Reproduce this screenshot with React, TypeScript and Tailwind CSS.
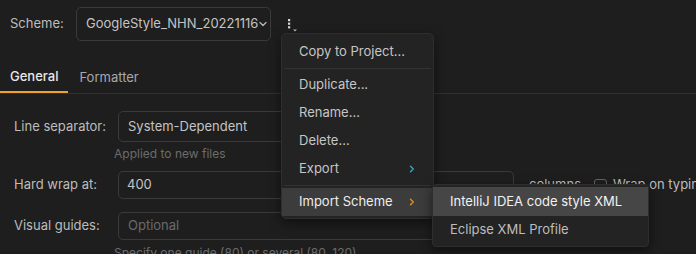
function Chevron({ color }: { color: string }) {
  return (
    <svg width="6" height="8" viewBox="0 0 6 8" fill="none">
      <path d="M1.5 1.2L4.3 4L1.5 6.8" stroke={color} strokeWidth="1.4" strokeLinecap="round" strokeLinejoin="round" />
    </svg>
  );
}

function Kebab() {
  return (
    <svg width="14" height="16" viewBox="0 0 14 16" fill="none">
      <rect x="2" y="1" width="2.2" height="2.2" fill="#d8d8d8" />
      <rect x="2" y="4.6" width="2.2" height="2.2" fill="#d8d8d8" />
      <rect x="2" y="8.2" width="2.2" height="2.2" fill="#d8d8d8" />
      <path d="M7 11.6h4l-2 2z" fill="#bdbdbd" />
    </svg>
  );
}

function MenuItem({ label, active, chevron }: { label: string; active?: boolean; chevron?: string }) {
  return (
    <div
      className={
        active
          ? "flex h-[28px] items-center bg-[#3c3c3c] pl-[17px] pr-[18px] text-[#ededed]"
          : "flex h-[28px] items-center pl-[17px] pr-[18px] text-[#c6c6c6]"
      }
    >
      <span className="whitespace-nowrap">{label}</span>
      {chevron && (
        <span className="ml-auto flex">
          <Chevron color={chevron} />
        </span>
      )}
    </div>
  );
}

function Sep() {
  return (
    <div className="flex h-[5px] items-center px-[2px]">
      <div className="h-px w-full bg-[#333333]" />
    </div>
  );
}

export default function App() {
  return (
    <div className="relative h-[254px] w-[696px] overflow-hidden bg-[#1e1e1e] font-[Inter,sans-serif] text-[13px] text-[#bdbdbd]">
      {/* Scheme row */}
      <div className="flex h-[48px] items-center pl-[10px]">
        <span className="w-[66px]">Scheme:</span>
        <div className="flex h-[34px] w-[195px] items-center rounded-[5px] border border-[#3a3a3a] pl-[9px] pr-[3px]">
          <span className="flex-1 overflow-hidden whitespace-nowrap text-[#c4c4c4]">GoogleStyle_NHN_20221116</span>
          <svg width="8" height="6" viewBox="0 0 8 6" fill="none" className="-ml-[2px]">
            <path d="M1 1.5L4 4.5L7 1.5" stroke="#bdbdbd" strokeWidth="1.2" strokeLinecap="round" strokeLinejoin="round" />
          </svg>
        </div>
        <div className="ml-[15px] mt-[3px] flex">
          <Kebab />
        </div>
      </div>

      {/* Tabs */}
      <div className="mt-[14px] flex h-[32px] border-b border-[#313131]">
        <div className="flex items-center border-b-2 border-[#f0a02c] px-[10px] font-medium text-[#e8e8e8]">General</div>
        <div className="flex items-center px-[11px] text-[#a9a9a9]">Formatter</div>
      </div>

      {/* Form */}
      <div className="pl-[14px]">
        <div className="mt-[17px] flex items-center">
          <span className="w-[104px] shrink-0">Line separator:</span>
          <div className="flex h-[31px] w-[200px] shrink-0 items-center rounded-[5px] border border-[#3a3a3a] pl-[9px] text-[#c4c4c4]">
            System-Dependent
          </div>
        </div>
        <div className="ml-[100px] mt-[4px] h-[16px] text-[12px] leading-[16px] text-[#6c6c6c]">Applied to new files</div>

        <div className="mt-[9px] flex items-center">
          <span className="w-[104px] shrink-0">Hard wrap at:</span>
          <div className="flex h-[28px] w-[396px] shrink-0 items-center rounded-[5px] border border-[#3a3a3a] pl-[8px] text-[#c4c4c4]">
            400
          </div>
          <span className="ml-[15px] shrink-0">columns</span>
          <div className="ml-[13px] h-[13px] w-[13px] shrink-0 rounded-[3px] border border-[#666666]" />
          <span className="ml-[6px] shrink-0 whitespace-nowrap">Wrap on typing</span>
        </div>

        <div className="mt-[13px] flex items-center">
          <span className="w-[104px] shrink-0">Visual guides:</span>
          <div className="flex h-[28px] w-[396px] shrink-0 items-center rounded-[5px] border border-[#3a3a3a] pl-[9px] text-[#6a6a6a]">
            Optional
          </div>
        </div>
        <div className="ml-[100px] mt-[5px] whitespace-nowrap text-[12px] leading-[16px] text-[#6c6c6c]">
          Specify one guide (80) or several (80, 120)
        </div>
      </div>

      {/* Popup menu */}
      <div className="absolute left-[281px] top-[33px] w-[153px] rounded-[5px] border border-[#2e2e2e] bg-[#232323] pb-[2px] pt-[4px] shadow-[0_4px_12px_rgba(0,0,0,0.5)]">
        <MenuItem label="Copy to Project..." />
        <Sep />
        <MenuItem label="Duplicate..." />
        <MenuItem label="Rename..." />
        <MenuItem label="Delete..." />
        <MenuItem label="Export" chevron="#3aa6b8" />
        <Sep />
        <MenuItem label="Import Scheme" active chevron="#e0901e" />
      </div>

      {/* Submenu */}
      <div className="absolute left-[432px] top-[184px] w-[217px] rounded-[4px] border border-[#2e2e2e] bg-[#232323] py-[2px] shadow-[0_4px_12px_rgba(0,0,0,0.5)]">
        <div className="flex h-[29px] items-center bg-[#464646] pl-[17px] text-[#f2f2f2]">IntelliJ IDEA code style XML</div>
        <div className="flex h-[28px] items-center pl-[17px] text-[#bdbdbd]">Eclipse XML Profile</div>
      </div>
    </div>
  );
}
